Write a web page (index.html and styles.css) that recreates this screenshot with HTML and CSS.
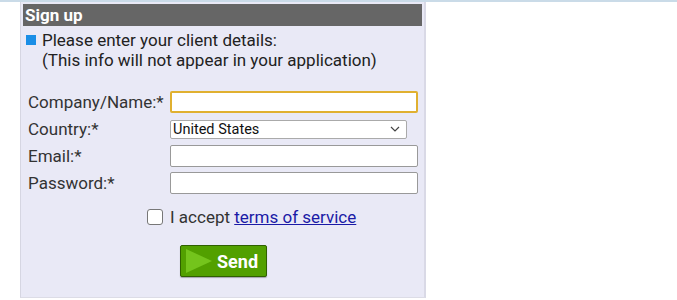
FILE: index.html
```html
<!DOCTYPE html>
<html lang="en">
  <head>
    <meta charset="UTF-8" />
    <meta name="viewport" content="width=device-width, initial-scale=1.0" />
    <title>Sign up</title>
    <link rel="stylesheet" href="styles.css">
  </head>
  <body>
    <div class="topline"></div>
    <div class="panel">
      <h2 class="panel-title">Sign up</h2>

      <div class="intro">
        <span class="bullet"></span>
        <p>Please enter your client details:<br />(This info will not appear in your application)</p>
      </div>

      <form class="signup-form">
        <label for="company">Company/Name:*</label>
        <input type="text" id="company" class="field focused" />

        <label for="country">Country:*</label>
        <div class="select-box">
          <span>United States</span>
          <svg width="10" height="6" viewBox="0 0 10 6"><path d="M1 1l4 4 4-4" fill="none" stroke="#444" stroke-width="1.2" /></svg>
        </div>

        <label for="email">Email:*</label>
        <input type="text" id="email" class="field" />

        <label for="password">Password:*</label>
        <input type="password" id="password" class="field" />
      </form>

      <div class="accept">
        <span class="checkbox"></span>
        <span>I accept <a href="#">terms of service</a></span>
      </div>

      <div class="actions">
        <button type="button" class="send-btn">
          <svg width="30" height="26" viewBox="0 0 30 26"><path d="M2 1L28 13L2 25Z" fill="#74c41c" /></svg>
          Send
        </button>
      </div>
    </div>
  </body>
</html>
```

FILE: styles.css
```css
* {
  box-sizing: border-box;
  margin: 0;
  padding: 0;
}

body {
  font-family: Roboto, "Liberation Sans", Arial, sans-serif;
  font-size: 17px;
  color: #222;
  background-color: #fff;
  height: 300px;
  overflow: hidden;
}

.topline {
  height: 2px;
  background-color: #cadbe8;
}

.panel {
  margin-left: 20px;
  width: 406px;
  height: 296px;
  background-color: #e9e9f6;
  border-left: 1px solid #d6d6e2;
  border-right: 2px solid #d9d9e6;
  border-bottom: 1px solid #dcdce6;
  padding: 2px 2px 0 2px;
}

.panel-title {
  background-color: #666;
  color: #fff;
  font-size: 17px;
  font-weight: bold;
  height: 22px;
  line-height: 22px;
  padding-left: 2px;
}

.intro {
  display: flex;
  align-items: flex-start;
  padding: 4px 0 0 3px;
  line-height: 20px;
}

.bullet {
  width: 10px;
  height: 10px;
  background-color: #1a8ee6;
  margin: 5px 6px 0 0;
  flex-shrink: 0;
}

.signup-form {
  display: grid;
  grid-template-columns: 142px 248px;
  row-gap: 5px;
  align-items: center;
  margin: 21px 0 0 5px;
}

.signup-form label {
  line-height: 22px;
  color: #333;
}

.field {
  height: 22px;
  border: 1px solid #999;
  border-radius: 2px;
  background-color: #fff;
}

.field.focused {
  border: 2px solid #e0b030;
}

.select-box {
  width: 237px;
  height: 19px;
  border: 1px solid #aaa;
  border-radius: 2px;
  background-color: #fff;
  display: flex;
  align-items: center;
  justify-content: space-between;
  padding: 0 6px 0 2px;
  font-size: 14.5px;
  color: #111;
}

.accept {
  display: flex;
  align-items: center;
  gap: 7px;
  margin: 13px 0 0 124px;
  color: #333;
}

.checkbox {
  width: 16px;
  height: 16px;
  border: 1px solid #777;
  border-radius: 3px;
  background-color: #fff;
}

.accept a {
  color: #1a1aa6;
}

.actions {
  margin: 18px 0 0 157px;
}

.send-btn {
  display: flex;
  align-items: center;
  gap: 3px;
  width: 87px;
  height: 32px;
  background-color: #52a000;
  border: 1px solid #2f6000;
  border-radius: 2px;
  box-shadow: 0 1px 1px rgba(0, 0, 0, 0.3);
  color: #fff;
  font-family: Roboto, "Liberation Sans", Arial, sans-serif;
  font-size: 18px;
  font-weight: bold;
  padding-left: 3px;
}
```
